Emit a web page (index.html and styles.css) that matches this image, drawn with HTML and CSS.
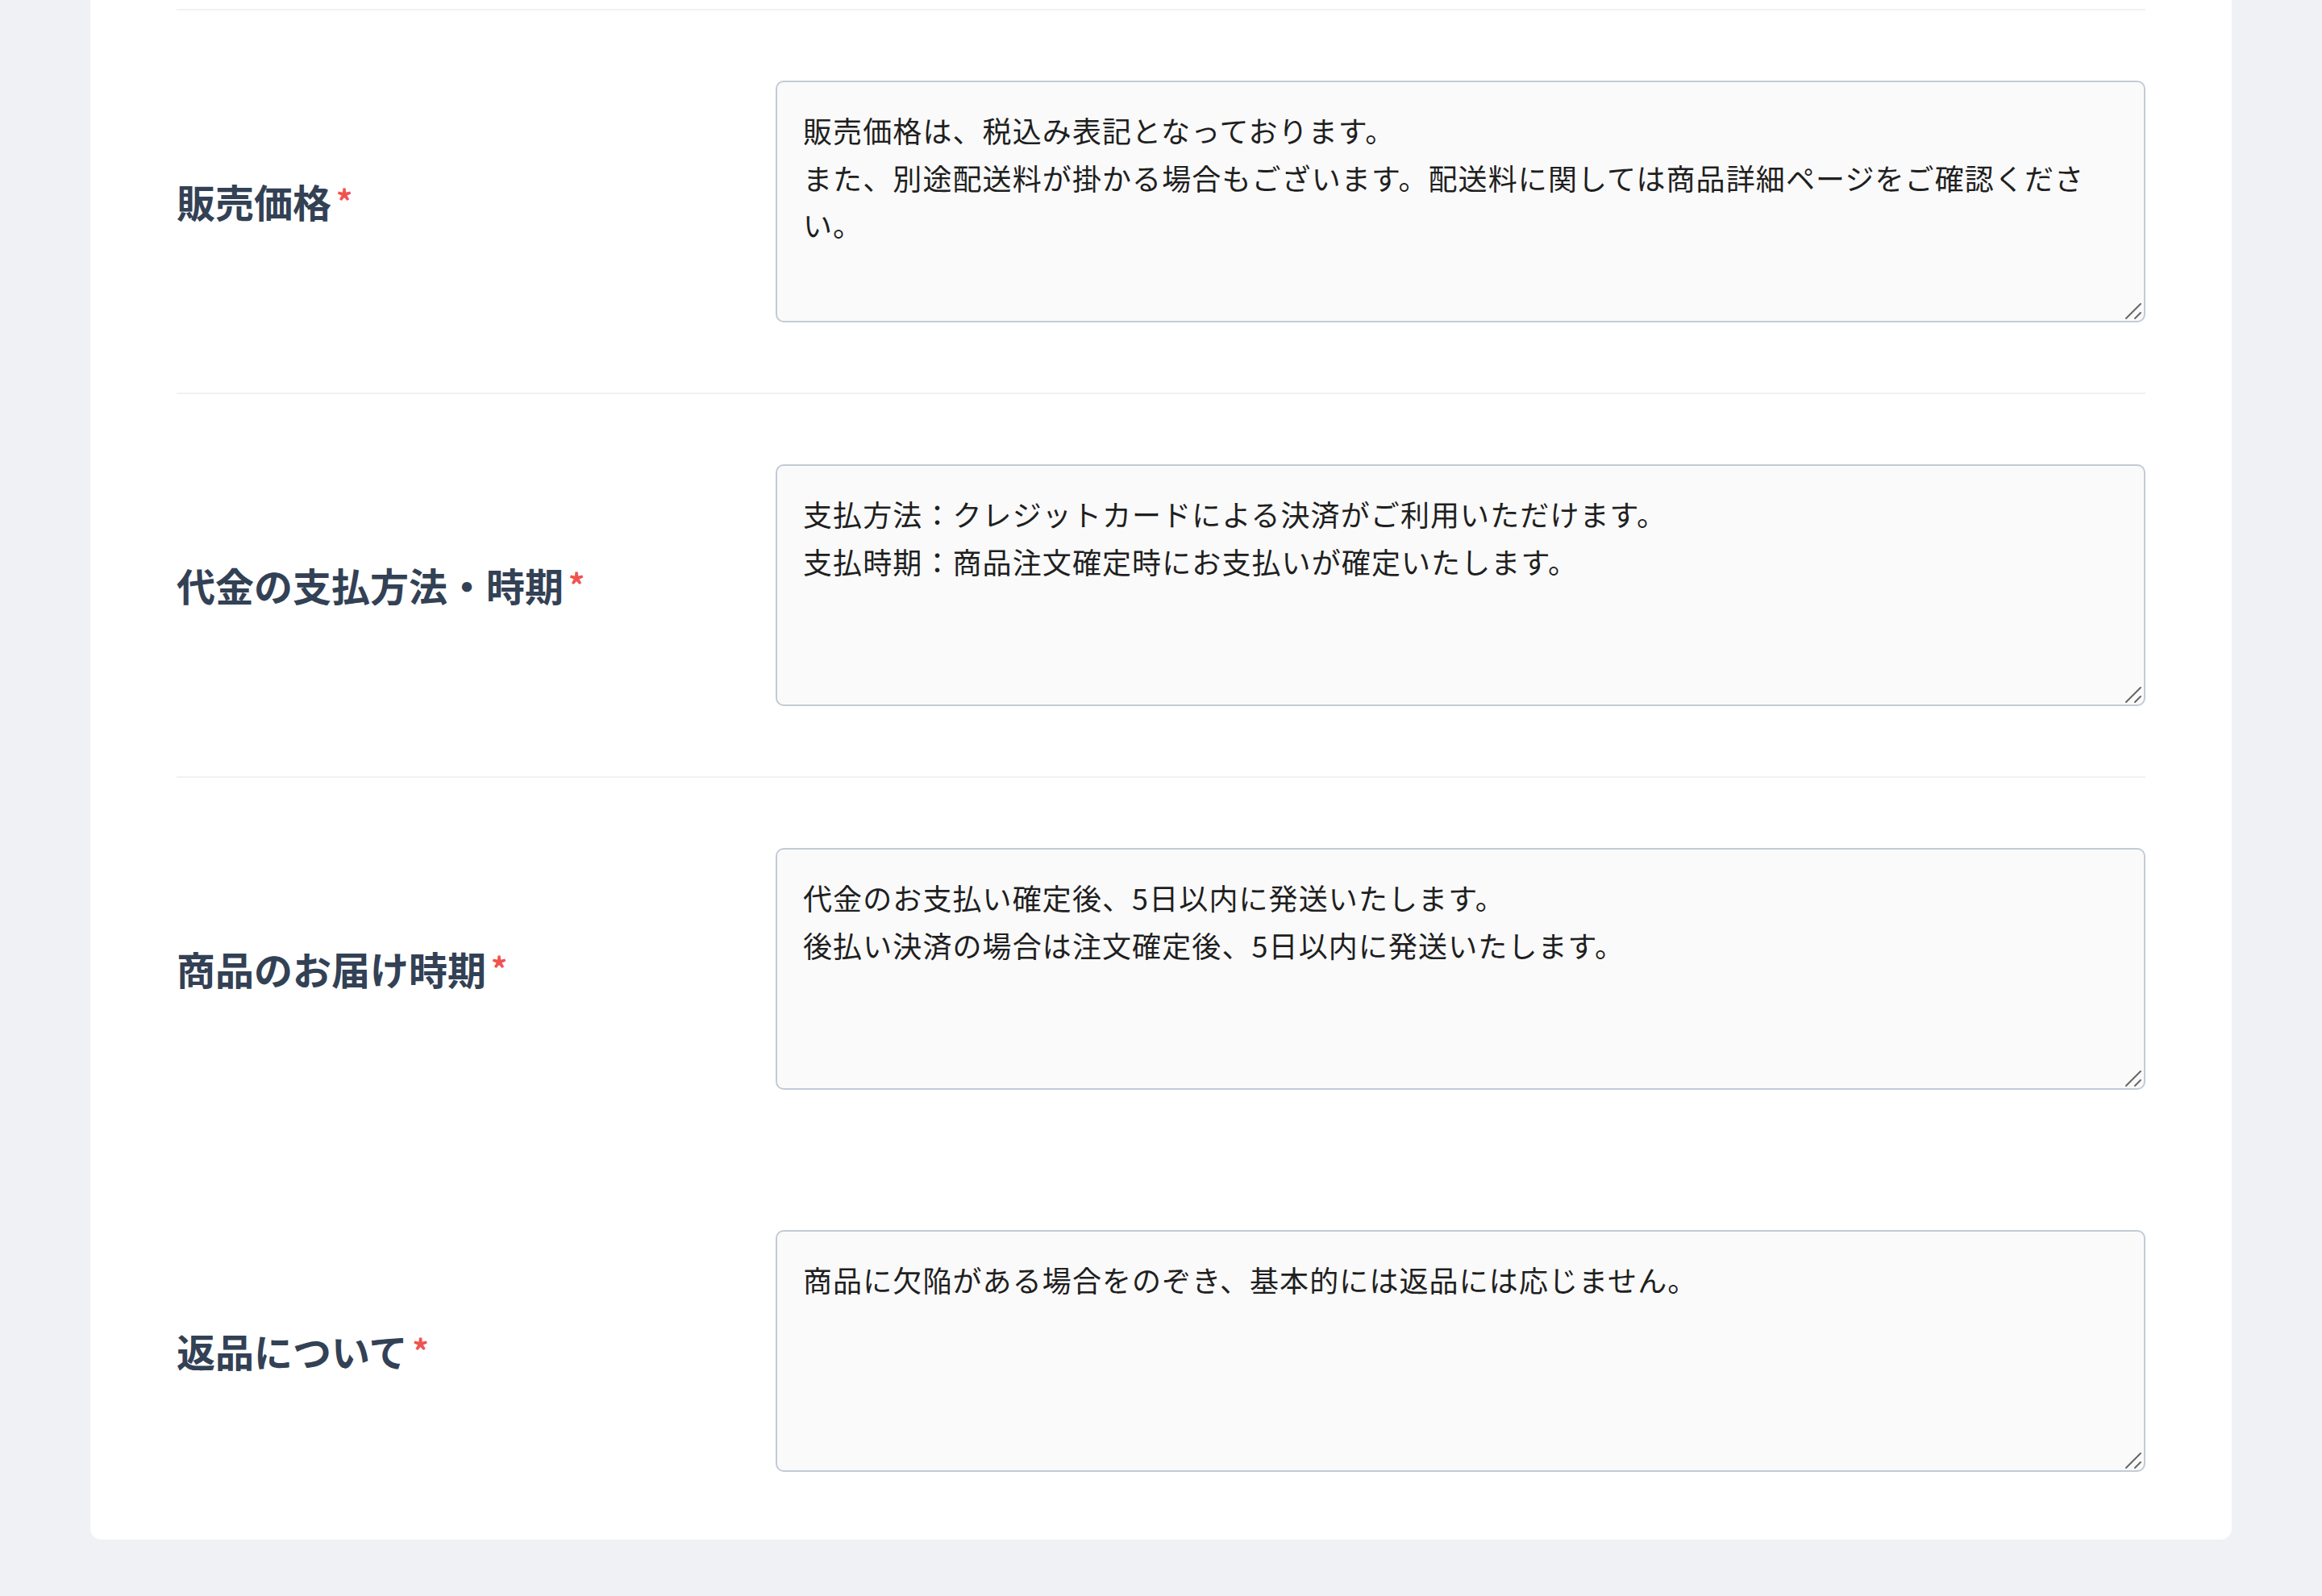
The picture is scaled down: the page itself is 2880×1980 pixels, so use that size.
FILE: index.html
```html
<!DOCTYPE html>
<html lang="ja">
<head>
    <meta charset="UTF-8">
    <meta name="viewport" content="width=device-width, initial-scale=1.0">
    <title>特定商取引法に基づく表記</title>
    <link rel="stylesheet" href="styles.css">
</head>
<body>

    <div class="page">
        <div class="card">

            <!-- 販売価格 -->
            <div class="form-row">
                <label class="form-label" for="price">販売価格<span class="required">*</span></label>
                <div class="textarea-wrap">
                    <textarea id="price" class="form-textarea">販売価格は、税込み表記となっております。
また、別途配送料が掛かる場合もございます。配送料に関しては商品詳細ページをご確認ください。</textarea>
                    <svg class="resize-grip" width="22" height="22" viewBox="0 0 22 22"><path d="M2 20L20 2M13 20L20 13" stroke="#666" stroke-width="2" stroke-linecap="round"/></svg>
                </div>
            </div>

            <!-- 支払方法 -->
            <div class="form-row">
                <label class="form-label" for="payment">代金の支払方法・時期<span class="required">*</span></label>
                <div class="textarea-wrap">
                    <textarea id="payment" class="form-textarea">支払方法：クレジットカードによる決済がご利用いただけます。
支払時期：商品注文確定時にお支払いが確定いたします。</textarea>
                    <svg class="resize-grip" width="22" height="22" viewBox="0 0 22 22"><path d="M2 20L20 2M13 20L20 13" stroke="#666" stroke-width="2" stroke-linecap="round"/></svg>
                </div>
            </div>

            <!-- お届け時期 -->
            <div class="form-row">
                <label class="form-label" for="delivery">商品のお届け時期<span class="required">*</span></label>
                <div class="textarea-wrap">
                    <textarea id="delivery" class="form-textarea">代金のお支払い確定後、5日以内に発送いたします。
後払い決済の場合は注文確定後、5日以内に発送いたします。</textarea>
                    <svg class="resize-grip" width="22" height="22" viewBox="0 0 22 22"><path d="M2 20L20 2M13 20L20 13" stroke="#666" stroke-width="2" stroke-linecap="round"/></svg>
                </div>
            </div>

            <!-- 返品 -->
            <div class="form-row no-border last">
                <label class="form-label" for="returns">返品について<span class="required">*</span></label>
                <div class="textarea-wrap">
                    <textarea id="returns" class="form-textarea">商品に欠陥がある場合をのぞき、基本的には返品には応じません。</textarea>
                    <svg class="resize-grip" width="22" height="22" viewBox="0 0 22 22"><path d="M2 20L20 2M13 20L20 13" stroke="#666" stroke-width="2" stroke-linecap="round"/></svg>
                </div>
            </div>

        </div>
    </div>

</body>
</html>
```

FILE: styles.css
```css
body {
    margin: 0;
    padding: 0;
    background-color: #eff1f5;
    font-family: "Noto Sans CJK JP", "Noto Sans", sans-serif;
}

.page {
    padding: 0 112px 72px;
}

.card {
    background-color: #fff;
    border-radius: 0 0 14px 14px;
    padding: 11px 107px 0;
}

/* one row = label + textarea */
.form-row {
    display: grid;
    grid-template-columns: 743px 1fr;
    align-items: center;
    border-top: 2px solid #f0f1f4;
    padding: 87px 0;
}

.form-row.no-border {
    border-top: none;
}

.form-row.last {
    padding-bottom: 84px;
}

.form-label {
    font-size: 48px;
    font-weight: bold;
    color: #334155;
    line-height: 1.4;
}

.required {
    color: #ef5350;
    font-size: 40px;
    margin-left: 6px;
    vertical-align: 4px;
}

.textarea-wrap {
    position: relative;
    line-height: 0;
}

.form-textarea {
    box-sizing: border-box;
    width: 100%;
    height: 300px;
    padding: 30px 26px 30px 32px;
    border: 2px solid #c3cad7;
    border-radius: 10px;
    background-color: #fafafa;
    font-family: inherit;
    font-size: 36px;
    letter-spacing: 1.1px;
    line-height: 58.5px;
    color: #1f1f1f;
    resize: none;
    outline: none;
    display: block;
}

/* drawn resize handle, sits over the textarea corner */
.resize-grip {
    position: absolute;
    right: 4px;
    bottom: 3px;
    pointer-events: none;
}
```
